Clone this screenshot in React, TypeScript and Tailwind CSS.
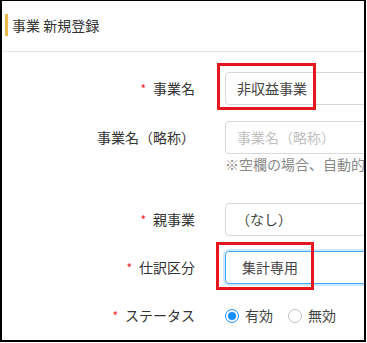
const Required = () => (
  <span className="mr-[7px] text-[12px] leading-none text-[#f5222d]">*</span>
)

const Label = ({ text, required }: { text: string; required?: boolean }) => (
  <div className="flex h-[33px] w-[193px] shrink-0 items-center justify-end text-[14px] text-[#333]">
    {required && <Required />}
    <span>{text}</span>
  </div>
)

const Radio = ({ checked, label }: { checked?: boolean; label: string }) => (
  <label className="flex items-center">
    <span
      className={
        checked
          ? "flex h-[14px] w-[14px] items-center justify-center rounded-full border border-[#1890ff] bg-white"
          : "flex h-[14px] w-[14px] items-center justify-center rounded-full border border-[#bfbfbf] bg-white"
      }
    >
      {checked && <span className="h-[8px] w-[8px] rounded-full bg-[#1890ff]" />}
    </span>
    <span className="ml-[6px] text-[14px] text-[#444]">{label}</span>
  </label>
)

export default function App() {
  return (
    <div className="relative h-[342px] w-[366px] overflow-hidden border-b-2 border-l-2 border-r-2 border-t border-black bg-white font-['Noto_Sans_CJK_JP',sans-serif]">
      {/* Header */}
      <div className="flex h-[51px] items-center border-b border-[#e5e5e5] pb-[3px] pl-[3px]">
        <div className="h-[22px] w-[3px] bg-[#e8b84a]" />
        <h1 className="ml-[4px] text-[14px] leading-none text-[#333]">事業 新規登録</h1>
      </div>

      {/* Form */}
      <div className="pt-[20px]">
        <div className="mb-[16px] flex">
          <Label text="事業名" required />
          <div className="ml-[30px] flex h-[33px] w-[220px] shrink-0 items-center rounded-[4px] border border-[#d9d9d9] pl-[11px] text-[14px] text-[#444]">
            非収益事業
          </div>
        </div>

        <div className="mb-[29px] flex">
          <Label text="事業名（略称）" />
          <div className="ml-[30px] shrink-0">
            <div className="flex h-[33px] w-[220px] items-center rounded-[4px] border border-[#d9d9d9] pl-[11px] text-[14px] text-[#bfbfbf]">
              事業名（略称）
            </div>
            <div className="h-[20px] whitespace-nowrap text-[14px] leading-[20px] text-[#888]">
              ※空欄の場合、自動的に設定されます
            </div>
          </div>
        </div>

        <div className="mb-[15px] flex">
          <Label text="親事業" required />
          <div className="ml-[30px] flex h-[33px] w-[220px] shrink-0 items-center rounded-[4px] border border-[#d9d9d9] pl-[10px] text-[14px] text-[#444]">
            （なし）
          </div>
        </div>

        <div className="mb-[15px] flex">
          <Label text="仕訳区分" required />
          <div className="ml-[30px] flex h-[33px] w-[220px] shrink-0 items-center rounded-[4px] border border-[#40a9ff] pl-[16px] text-[14px] text-[#444] shadow-[0_0_0_2px_rgba(24,144,255,0.2)]">
            集計専用
          </div>
        </div>

        <div className="flex">
          <Label text="ステータス" required />
          <div className="ml-[30px] flex h-[33px] items-center gap-[15px]">
            <Radio checked label="有効" />
            <Radio label="無効" />
          </div>
        </div>
      </div>

      {/* Highlight boxes */}
      <div className="absolute left-[215px] top-[62px] h-[47px] w-[99px] border-[3px] border-[#e8141e]" />
      <div className="absolute left-[214px] top-[241px] h-[48px] w-[98px] border-[3px] border-[#e8141e]" />
    </div>
  )
}
